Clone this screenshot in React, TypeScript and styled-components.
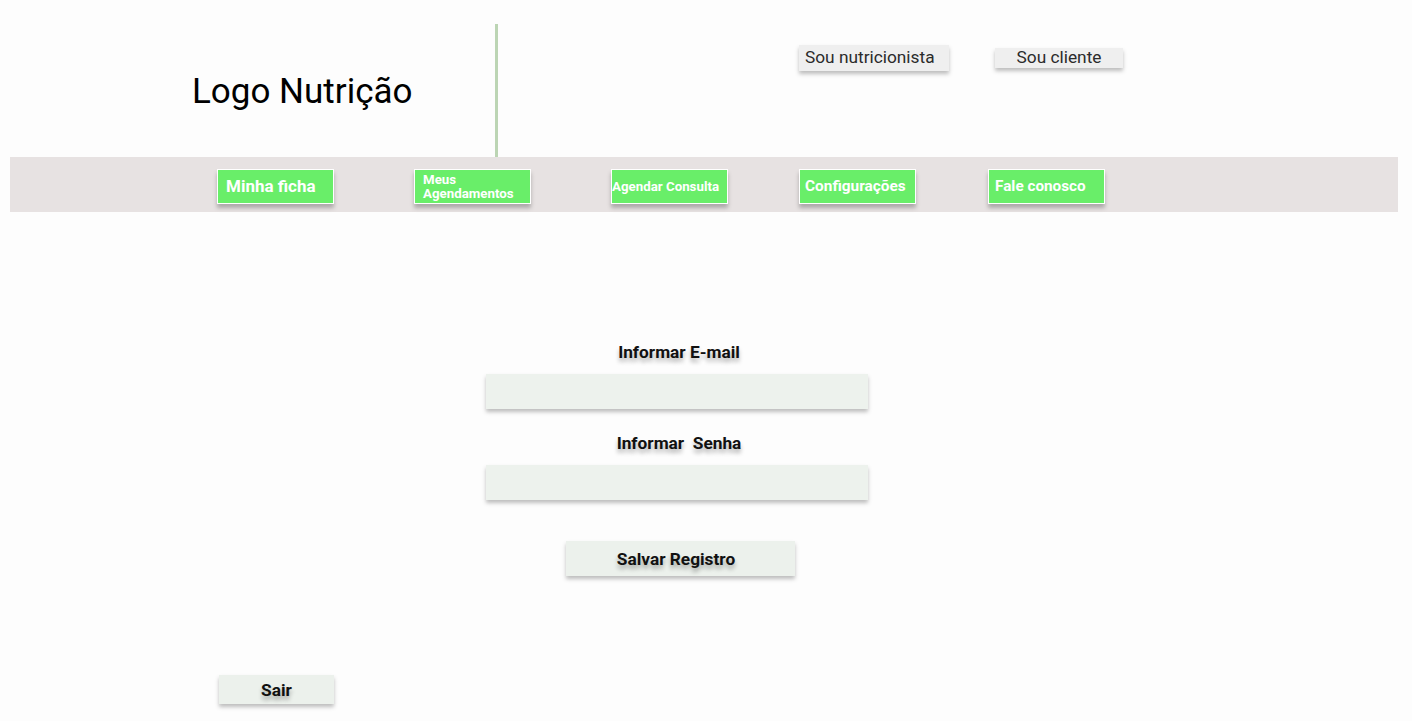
import styled, { createGlobalStyle } from 'styled-components';

const GlobalStyle = createGlobalStyle`
  body {
    margin: 0;
    background: #fdfdfd;
    font-family: Roboto, 'Liberation Sans', sans-serif;
  }
`;

const Page = styled.div`
  width: 1412px;
  height: 721px;
  padding: 0 14px 0 10px;
  box-sizing: border-box;
  display: flex;
  flex-direction: column;
  overflow: hidden;
`;

const Header = styled.header`
  height: 157px;
  display: flex;
`;

const LogoArea = styled.div`
  width: 485px;
  padding-left: 182px;
  padding-top: 71px;
  box-sizing: border-box;
`;

const Logo = styled.h1`
  margin: 0;
  font-size: 35px;
  font-weight: 400;
  color: #000;
  line-height: 42px;
`;

const Divider = styled.div`
  width: 3px;
  margin-top: 24px;
  background: #bcd5b4;
`;

const ProfileArea = styled.div`
  display: flex;
  align-items: flex-start;
  padding-left: 301px;
`;

const ProfileButton = styled.button<{ $width: number; $top: number; $height: number }>`
  width: ${(p) => p.$width}px;
  height: ${(p) => p.$height}px;
  margin-top: ${(p) => p.$top}px;
  margin-right: 46px;
  border: none;
  background: #efefef;
  box-shadow: 0 3px 4px rgba(0, 0, 0, 0.25);
  font-family: Roboto, 'Liberation Sans', sans-serif;
  font-size: 17.3px;
  color: #2b2b2b;
  padding: 0 6px;
  text-align: ${(p) => (p.$width > 140 ? 'left' : 'center')};
  line-height: 1;
`;

const Nav = styled.nav`
  height: 55px;
  background: #e7e2e2;
  display: flex;
  align-items: flex-start;
  padding-left: 207px;
  padding-top: 12px;
  box-sizing: border-box;
`;

const NavButton = styled.button<{ $gap: number; $size: number; $pad: number }>`
  flex: 0 0 117px;
  height: 35px;
  margin-left: ${(p) => p.$gap}px;
  background: #69ee69;
  border: 1px solid #ffffff;
  box-shadow: 0 4px 4px rgba(0, 0, 0, 0.25);
  color: #ffffff;
  font-family: Roboto, 'Liberation Sans', sans-serif;
  font-weight: 700;
  font-size: ${(p) => p.$size}px;
  line-height: 1.05;
  text-align: left;
  padding: 0 0 0 ${(p) => p.$pad}px;
  white-space: nowrap;
  display: flex;
  align-items: center;
  box-sizing: border-box;
`;

const Form = styled.form`
  width: 382px;
  margin-left: 476px;
  margin-top: 130px;
  display: flex;
  flex-direction: column;
  align-items: center;
`;

const Label = styled.label`
  font-size: 17.3px;
  font-weight: 700;
  color: #111;
  text-shadow: 0 4px 4px rgba(0, 0, 0, 0.3);
  line-height: 20px;
  white-space: pre;
  margin-bottom: 12px;
  padding-left: 4px;
`;

const Input = styled.input`
  width: 100%;
  height: 35px;
  border: none;
  background: #edf2ed;
  box-shadow: 0 3px 4px rgba(0, 0, 0, 0.25);
  margin-bottom: 24px;
  outline: none;
  box-sizing: border-box;
`;

const ActionButton = styled.button<{ $width: number; $height: number; $shift?: number }>`
  width: ${(p) => p.$width}px;
  height: ${(p) => p.$height}px;
  border: none;
  background: #ecf1ec;
  box-shadow: 0 3px 4px rgba(0, 0, 0, 0.25);
  font-family: Roboto, 'Liberation Sans', sans-serif;
  font-weight: 700;
  font-size: 17.3px;
  color: #111;
  text-shadow: 0 4px 4px rgba(0, 0, 0, 0.3);
  padding: 0 ${(p) => p.$shift ?? 0}px 0 0;
`;

const SaveRow = styled.div`
  margin-top: 17px;
  padding-left: 7px;
`;

const Footer = styled.div`
  margin-top: 99px;
  padding-left: 209px;
`;

const App = () => {
  return (
    <>
      <GlobalStyle />
      <Page>
        <Header>
          <LogoArea>
            <Logo>Logo Nutrição</Logo>
          </LogoArea>
          <Divider />
          <ProfileArea>
            <ProfileButton $width={150} $height={26} $top={45}>
              Sou nutricionista
            </ProfileButton>
            <ProfileButton $width={128} $height={20} $top={48}>
              Sou cliente
            </ProfileButton>
          </ProfileArea>
        </Header>
        <Nav>
          <NavButton $gap={0} $size={17} $pad={8}>
            Minha ficha
          </NavButton>
          <NavButton $gap={80} $size={13.3} $pad={8}>
            Meus
            <br />
            Agendamentos
          </NavButton>
          <NavButton $gap={80} $size={13.3} $pad={0}>
            Agendar Consulta
          </NavButton>
          <NavButton $gap={71} $size={15.4} $pad={5}>
            Configurações
          </NavButton>
          <NavButton $gap={72} $size={15.3} $pad={6}>
            Fale conosco
          </NavButton>
        </Nav>
        <Form onSubmit={(e) => e.preventDefault()}>
          <Label>Informar E-mail</Label>
          <Input type="email" />
          <Label>Informar  Senha</Label>
          <Input type="password" />
          <SaveRow>
            <ActionButton $width={229} $height={35} $shift={9}>
              Salvar Registro
            </ActionButton>
          </SaveRow>
        </Form>
        <Footer>
          <ActionButton $width={115} $height={29}>
            Sair
          </ActionButton>
        </Footer>
      </Page>
    </>
  );
};

export default App;
